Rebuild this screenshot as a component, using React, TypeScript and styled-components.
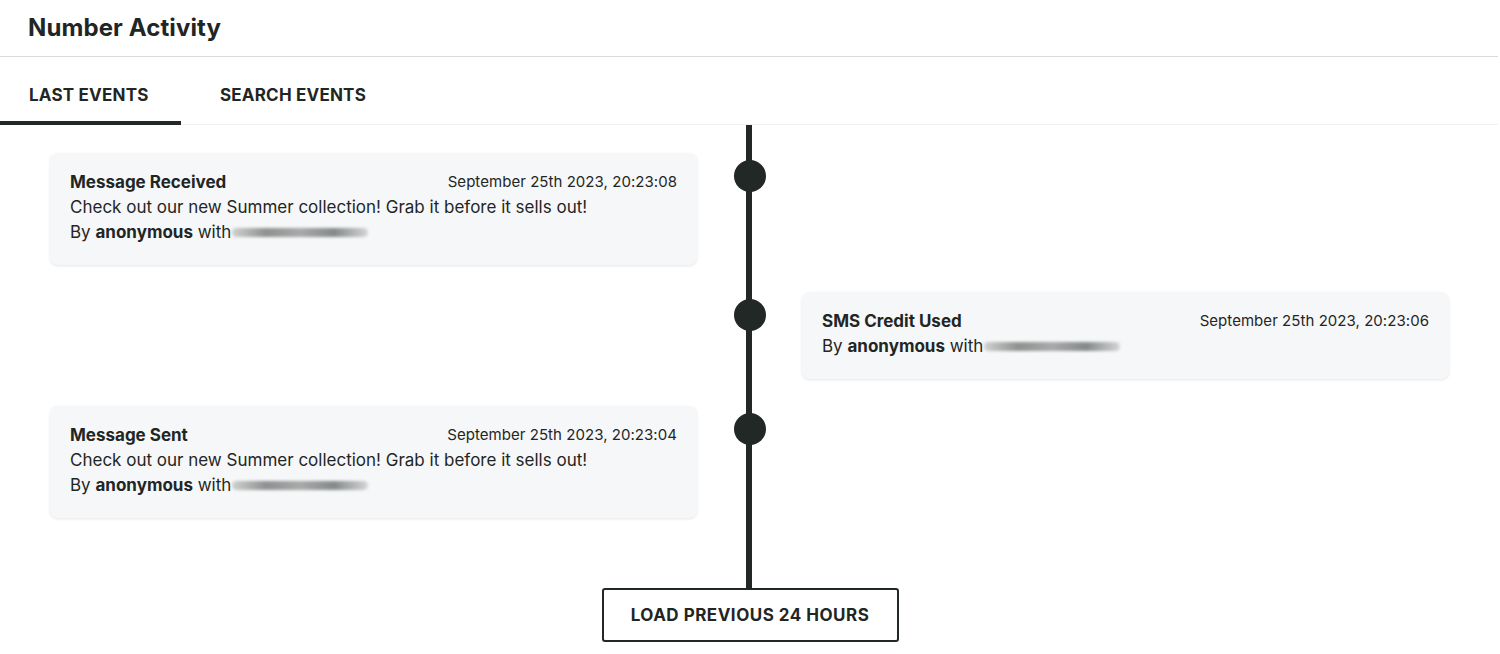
import React from 'react';
import styled, { createGlobalStyle } from 'styled-components';

const GlobalStyle = createGlobalStyle`
  body {
    margin: 0;
    background: #ffffff;
    font-family: Inter, Lato, Arial, sans-serif;
    color: #1f2624;
  }
`;

const Page = styled.div`
  width: 1498px;
`;

const Header = styled.header`
  height: 57px;
  display: flex;
  align-items: center;
  padding: 0 0 2px 28px;
  box-sizing: border-box;
  border-bottom: 1px solid #d9dbdb;
`;

const Title = styled.h1`
  margin: 0;
  font-size: 24px;
  font-weight: 700;
  letter-spacing: 0.1px;
  color: #1f2624;
`;

const TabBar = styled.nav`
  display: flex;
  height: 67px;
  border-bottom: 1px solid #f0f1f1;
`;

const Tab = styled.div<{ $active?: boolean; $pad: number; $width: number }>`
  width: ${(p) => p.$width}px;
  padding: 12px 0 0 ${(p) => p.$pad}px;
  box-sizing: border-box;
  display: flex;
  align-items: center;
  font-size: 17px;
  font-weight: 700;
  letter-spacing: 0.2px;
  text-transform: uppercase;
  color: #1f2624;
  border-bottom: 4px solid ${(p) => (p.$active ? '#222826' : 'transparent')};
  margin-bottom: -1px;
`;

const Timeline = styled.section`
  padding: 28px 49px 70px 50px;
  background: linear-gradient(#222826, #222826) 746px 0 / 6px 100% no-repeat;
`;

const Row = styled.div`
  display: grid;
  grid-template-columns: 647px 105px 647px;
  margin-bottom: 27px;

  &:last-child {
    margin-bottom: 0;
  }
`;

const Dot = styled.div`
  grid-column: 2;
  grid-row: 1;
  justify-self: center;
  margin-top: 7px;
  width: 32px;
  height: 32px;
  border-radius: 50%;
  background: #222826;
`;

const Card = styled.div<{ $side: 'left' | 'right' }>`
  grid-column: ${(p) => (p.$side === 'left' ? 1 : 3)};
  grid-row: 1;
  background: #f6f7f9;
  border-radius: 8px;
  box-shadow: 0 1px 3px rgba(0, 0, 0, 0.1);
  padding: 17px 20px 20px;
  font-size: 17px;
  line-height: 25px;
`;

const CardHead = styled.div`
  display: flex;
  justify-content: space-between;
  align-items: center;
  height: 25px;
`;

const CardLine = styled.div`
  height: 25px;
  white-space: nowrap;
`;

const EventName = styled.span`
  font-weight: 700;
`;

const EventTime = styled.span`
  font-size: 15px;
  letter-spacing: 0.05px;
  margin-top: -3px;
`;

const Redacted = styled.span`
  display: inline-block;
  vertical-align: middle;
  width: 136px;
  height: 9px;
  margin: -1px 0 0 1px;
  border-radius: 5px;
  background: linear-gradient(90deg, #cfd1d0 0%, #8d918f 25%, #a7aaa9 50%, #858a88 75%, #d4d6d5 100%);
  filter: blur(1.5px);
`;

const Footer = styled.div`
  display: flex;
  justify-content: center;
  padding-left: 2px;
`;

const LoadButton = styled.button`
  width: 297px;
  height: 54px;
  background: #ffffff;
  border: 2px solid #222826;
  border-radius: 3px;
  font-family: Inter, Lato, Arial, sans-serif;
  font-size: 17px;
  font-weight: 700;
  letter-spacing: 0.5px;
  color: #1f2624;
  text-transform: uppercase;
  cursor: pointer;
`;

interface EventItem {
  name: string;
  time: string;
  message?: string;
  side: 'left' | 'right';
}

const events: EventItem[] = [
  {
    name: 'Message Received',
    time: 'September 25th 2023, 20:23:08',
    message: 'Check out our new Summer collection! Grab it before it sells out!',
    side: 'left',
  },
  {
    name: 'SMS Credit Used',
    time: 'September 25th 2023, 20:23:06',
    side: 'right',
  },
  {
    name: 'Message Sent',
    time: 'September 25th 2023, 20:23:04',
    message: 'Check out our new Summer collection! Grab it before it sells out!',
    side: 'left',
  },
];

const App: React.FC = () => {
  return (
    <Page>
      <GlobalStyle />
      <Header>
        <Title>Number Activity</Title>
      </Header>
      <TabBar>
        <Tab $active $pad={29} $width={181}>Last Events</Tab>
        <Tab $pad={39} $width={225}>Search Events</Tab>
      </TabBar>
      <Timeline>
        {events.map((ev) => (
          <Row key={ev.time}>
            <Card $side={ev.side}>
              <CardHead>
                <EventName>{ev.name}</EventName>
                <EventTime>{ev.time}</EventTime>
              </CardHead>
              {ev.message && <CardLine>{ev.message}</CardLine>}
              <CardLine>
                By <EventName>anonymous</EventName> with<Redacted />
              </CardLine>
            </Card>
            <Dot />
          </Row>
        ))}
      </Timeline>
      <Footer>
        <LoadButton>Load previous 24 hours</LoadButton>
      </Footer>
    </Page>
  );
};

export default App;
